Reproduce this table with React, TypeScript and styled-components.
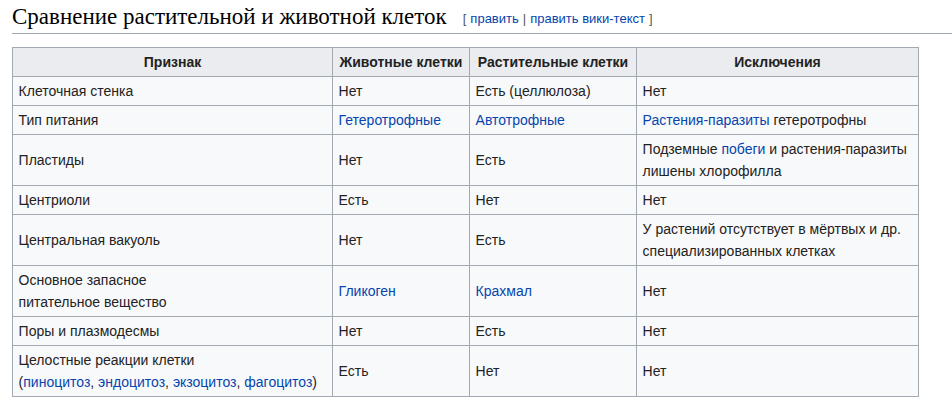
import React from "react";
import styled, { createGlobalStyle } from "styled-components";

const Global = createGlobalStyle`
  html, body { margin: 0; padding: 0; background: #fff; }
  body { font-family: "Liberation Sans", Arial, sans-serif; color: #222; }
`;

const Page = styled.div`
  padding: 0 0 0 12px;
`;

const Heading = styled.h2`
  margin: 2px 0 13px 0;
  padding: 0;
  font-family: "Liberation Serif", "Times New Roman", serif;
  font-weight: normal;
  font-size: 23px;
  line-height: 29px;
  color: #000;
  border-bottom: 1px solid #a2a9b1;
  white-space: nowrap;
`;

const EditSection = styled.span`
  font-family: "Liberation Sans", Arial, sans-serif;
  font-size: 13px;
  margin-left: 16px;
  color: #54595d;
  vertical-align: 1px;
`;

const Bracket = styled.span<{ $side: "l" | "r" }>`
  color: #54595d;
  margin: ${(p) => (p.$side === "l" ? "0 4px 0 0" : "0 0 0 4px")};
`;

const Divider = styled.span`
  color: #54595d;
  margin: 0 4px;
`;

const Link = styled.a`
  color: #0645ad;
  text-decoration: none;
`;

const Table = styled.table`
  border-collapse: collapse;
  table-layout: fixed;
  width: 906px;
  font-size: 14px;
  line-height: 22px;
  color: #222;
  background: #f8f9fa;
  border: 1px solid #a2a9b1;
`;

const Th = styled.th`
  background: #eaecf0;
  border: 1px solid #a2a9b1;
  padding: 3px 5.6px;
  font-weight: bold;
  text-align: center;
  vertical-align: middle;
`;

const Td = styled.td`
  border: 1px solid #a2a9b1;
  padding: 3px 5.6px;
  vertical-align: middle;
  text-align: left;
`;

const L = ({ children }: { children: React.ReactNode }) => (
  <Link href="#">{children}</Link>
);

export default function App() {
  return (
    <Page>
      <Global />
      <Heading>
        Сравнение растительной и животной клеток
        <EditSection>
          <Bracket $side="l">[</Bracket>
          <L>править</L>
          <Divider>|</Divider>
          <L>править вики-текст</L>
          <Bracket $side="r">]</Bracket>
        </EditSection>
      </Heading>
      <Table>
        <colgroup>
          <col style={{ width: 320 }} />
          <col style={{ width: 137 }} />
          <col style={{ width: 167 }} />
          <col style={{ width: 282 }} />
        </colgroup>
        <thead>
          <tr>
            <Th>Признак</Th>
            <Th>Животные клетки</Th>
            <Th>Растительные клетки</Th>
            <Th>Исключения</Th>
          </tr>
        </thead>
        <tbody>
          <tr>
            <Td>Клеточная стенка</Td>
            <Td>Нет</Td>
            <Td>Есть (целлюлоза)</Td>
            <Td>Нет</Td>
          </tr>
          <tr>
            <Td>Тип питания</Td>
            <Td><L>Гетеротрофные</L></Td>
            <Td><L>Автотрофные</L></Td>
            <Td><L>Растения-паразиты</L> гетеротрофны</Td>
          </tr>
          <tr>
            <Td>Пластиды</Td>
            <Td>Нет</Td>
            <Td>Есть</Td>
            <Td>Подземные <L>побеги</L> и растения-паразиты<br />лишены хлорофилла</Td>
          </tr>
          <tr>
            <Td>Центриоли</Td>
            <Td>Есть</Td>
            <Td>Нет</Td>
            <Td>Нет</Td>
          </tr>
          <tr>
            <Td>Центральная вакуоль</Td>
            <Td>Нет</Td>
            <Td>Есть</Td>
            <Td>У растений отсутствует в мёртвых и др.<br />специализированных клетках</Td>
          </tr>
          <tr>
            <Td>Основное запасное<br />питательное вещество</Td>
            <Td><L>Гликоген</L></Td>
            <Td><L>Крахмал</L></Td>
            <Td>Нет</Td>
          </tr>
          <tr>
            <Td>Поры и плазмодесмы</Td>
            <Td>Нет</Td>
            <Td>Есть</Td>
            <Td>Нет</Td>
          </tr>
          <tr>
            <Td>
              Целостные реакции клетки<br />
              (<L>пиноцитоз</L>, <L>эндоцитоз</L>, <L>экзоцитоз</L>, <L>фагоцитоз</L>)
            </Td>
            <Td>Есть</Td>
            <Td>Нет</Td>
            <Td>Нет</Td>
          </tr>
        </tbody>
      </Table>
    </Page>
  );
}
